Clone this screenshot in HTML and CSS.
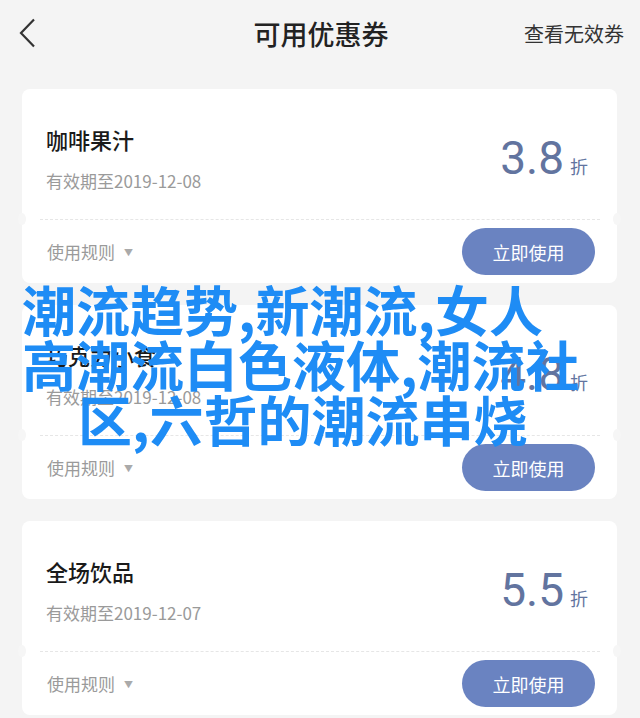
FILE: index.html
```html
<!DOCTYPE html>
<html lang="zh-CN">
<head>
    <meta charset="UTF-8">
    <meta name="viewport" content="width=device-width, initial-scale=1.0">
    <title>可用优惠券</title>
    <link rel="stylesheet" href="styles.css">
</head>
<body>
    <div class="header">
        <div class="back">
            <svg width="18" height="30" viewBox="0 0 18 30">
                <polyline points="16,1.5 3,15 16,28.5" fill="none" stroke="#333" stroke-width="2.2"/>
            </svg>
        </div>
        <div class="title">可用优惠券</div>
        <div class="invalid">查看无效券</div>
    </div>

    <div class="coupon-list">
        <div class="coupon">
            <div class="coupon-top">
                <div class="info">
                    <div class="name">咖啡果汁</div>
                    <div class="date">有效期至2019-12-08</div>
                </div>
                <div class="discount"><span class="num">3.8</span><span class="unit">折</span></div>
            </div>
            <div class="divider"></div>
            <div class="coupon-bottom">
                <div class="rules">使用规则<span class="arrow">▼</span></div>
                <button class="use-btn">立即使用</button>
            </div>
        </div>

        <div class="coupon">
            <div class="coupon-top">
                <div class="info">
                    <div class="name">巧克力小食</div>
                    <div class="date">有效期至2019-12-08</div>
                </div>
                <div class="discount"><span class="num">4.8</span><span class="unit">折</span></div>
            </div>
            <div class="divider"></div>
            <div class="coupon-bottom">
                <div class="rules">使用规则<span class="arrow">▼</span></div>
                <button class="use-btn">立即使用</button>
            </div>
        </div>

        <div class="coupon">
            <div class="coupon-top">
                <div class="info">
                    <div class="name">全场饮品</div>
                    <div class="date">有效期至2019-12-07</div>
                </div>
                <div class="discount"><span class="num">5.5</span><span class="unit">折</span></div>
            </div>
            <div class="divider"></div>
            <div class="coupon-bottom">
                <div class="rules">使用规则<span class="arrow">▼</span></div>
                <button class="use-btn">立即使用</button>
            </div>
        </div>
    </div>

    <div class="watermark">
        <div>潮流趋势,新潮流,女人</div>
        <div>高潮流白色液体,潮流社</div>
        <div class="indent">区,六哲的潮流串烧</div>
    </div>
</body>
</html>
```

FILE: styles.css
```css
body {
    margin: 0;
    background-color: #f4f4f4;
    font-family: "Noto Sans CJK SC", "Noto Sans", sans-serif;
    color: #222;
}
.header {
    height: 66px;
    display: grid;
    grid-template-columns: 1fr auto 1fr;
    align-items: center;
    padding: 0 16px 0 18px;
}
.header .back svg {
    display: block;
}
.header .title {
    font-size: 27px;
    font-weight: 500;
    color: #222;
}
.header .invalid {
    text-align: right;
    font-size: 20px;
    color: #333;
}
.coupon-list {
    display: flex;
    flex-direction: column;
    gap: 22px;
    padding: 23px 23px 0 22px;
}
.coupon {
    position: relative;
    background: #fff;
    border-radius: 8px;
}
.coupon-top {
    height: 130px;
    display: flex;
    justify-content: space-between;
    padding: 0 29px 0 24px;
}
.info {
    padding-top: 36px;
}
.name {
    font-size: 22px;
    font-weight: 500;
    line-height: 28px;
    color: #1a1a1a;
}
.date {
    margin-top: 16px;
    font-size: 17px;
    line-height: 24px;
    color: #9a9a9a;
}
.discount {
    margin-top: 48px;
    line-height: 42px;
}
.discount .num {
    font-family: Roboto, "Liberation Sans", sans-serif;
    font-size: 46px;
    color: #62749f;
}
.discount .unit {
    margin-left: 6px;
    font-size: 18px;
    color: #62749f;
}
.divider {
    margin: 0 17px 0 18px;
    border-top: 1px dashed #e6e6e6;
}
.divider::before,
.divider::after {
    content: "";
    position: absolute;
    width: 8px;
    height: 12px;
    margin-top: -7px;
    background: #f6f6f6;
    border-radius: 50%;
}
.divider::before {
    left: -4px;
}
.divider::after {
    right: -4px;
}
.coupon-bottom {
    height: 63px;
    display: flex;
    align-items: center;
    justify-content: space-between;
    padding: 0 22px 0 25px;
}
.rules {
    font-size: 17px;
    color: #9a9a9a;
}
.rules .arrow {
    font-size: 9px;
    margin-left: 9px;
    color: #aaa;
    vertical-align: 3px;
}
.use-btn {
    width: 133px;
    height: 47px;
    border: none;
    border-radius: 24px;
    background-color: #6a83c1;
    color: #fff;
    font-family: "Noto Sans CJK SC", sans-serif;
    font-size: 18px;
    padding: 0;
}
.watermark {
    position: absolute;
    top: 281px;
    left: 22px;
    font-size: 54px;
    line-height: 55px;
    font-weight: bold;
    color: #1e8cf5;
    white-space: nowrap;
    z-index: 10;
}
.watermark .indent {
    padding-left: 56px;
}
```
